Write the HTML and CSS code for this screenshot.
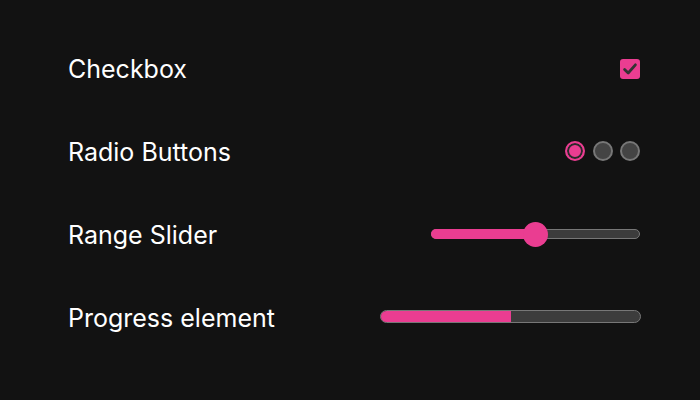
FILE: index.html
```html
<!DOCTYPE html>
<html>
<head>
<meta charset="utf-8">
<link rel="stylesheet" href="styles.css">
</head>
<body>
<main class="list">
  <div class="row">
    <span class="label">Checkbox</span>
    <span class="checkbox checked">
      <svg width="20" height="20" viewBox="0 0 20 20"><path d="M4.6 10.4 L8.2 14 L15.4 5.8" fill="none" stroke="#333" stroke-width="2.8" stroke-linecap="round" stroke-linejoin="round"/></svg>
    </span>
  </div>
  <div class="row">
    <span class="label">Radio Buttons</span>
    <span class="radios">
      <span class="radio checked"></span>
      <span class="radio"></span>
      <span class="radio"></span>
    </span>
  </div>
  <div class="row">
    <span class="label">Range Slider</span>
    <span class="range">
      <span class="range-fill" style="width: 50%"></span>
      <span class="range-thumb" style="left: 50%"></span>
    </span>
  </div>
  <div class="row">
    <span class="label">Progress element</span>
    <span class="progress"><span class="progress-fill" style="width: 50%"></span></span>
  </div>
</main>
</body>
</html>
```
FILE: styles.css
```css
html, body {
  margin: 0;
  padding: 0;
  background: #121212;
}
body {
  width: 700px;
  height: 400px;
  font-family: Inter, "Noto Sans", sans-serif;
  color: #ffffff;
}
.list {
  display: flex;
  flex-direction: column;
  padding: 27px 60px 0 68px;
}
.row {
  height: 83px;
  display: flex;
  align-items: center;
  justify-content: space-between;
}
.label {
  font-size: 25px;
}
.checkbox {
  width: 20px;
  height: 20px;
  border-radius: 3px;
  background: #ea3d91;
  display: flex;
}
.radios {
  display: flex;
  gap: 7.5px;
  margin-top: -1px;
}
.radio {
  width: 20px;
  height: 20px;
  box-sizing: border-box;
  border-radius: 50%;
  border: 2px solid #777;
  background: #444;
}
.radio.checked {
  border-color: #ea3d91;
  background: #ea3d91;
  box-shadow: inset 0 0 0 2px #2a2a2a;
}
.range {
  position: relative;
  width: 209px;
  height: 10px;
  box-sizing: border-box;
  border: 1px solid #777;
  border-radius: 5px;
  background: #3c3c3c;
  margin-top: -1px;
}
.range-fill {
  position: absolute;
  left: -1px;
  top: -1px;
  bottom: -1px;
  background: #ea3d91;
  border-radius: 5px 0 0 5px;
}
.range-thumb {
  position: absolute;
  top: 50%;
  width: 25px;
  height: 25px;
  margin: -12.5px 0 0 -12.5px;
  border-radius: 50%;
  background: #ea3d91;
}
.progress {
  width: 261px;
  height: 13px;
  box-sizing: border-box;
  border: 1px solid #777;
  border-radius: 6.5px;
  background: #3c3c3c;
  overflow: hidden;
  display: flex;
  margin: -2px -1px 0 0;
}
.progress-fill {
  background: #ea3d91;
  height: 100%;
}
```
